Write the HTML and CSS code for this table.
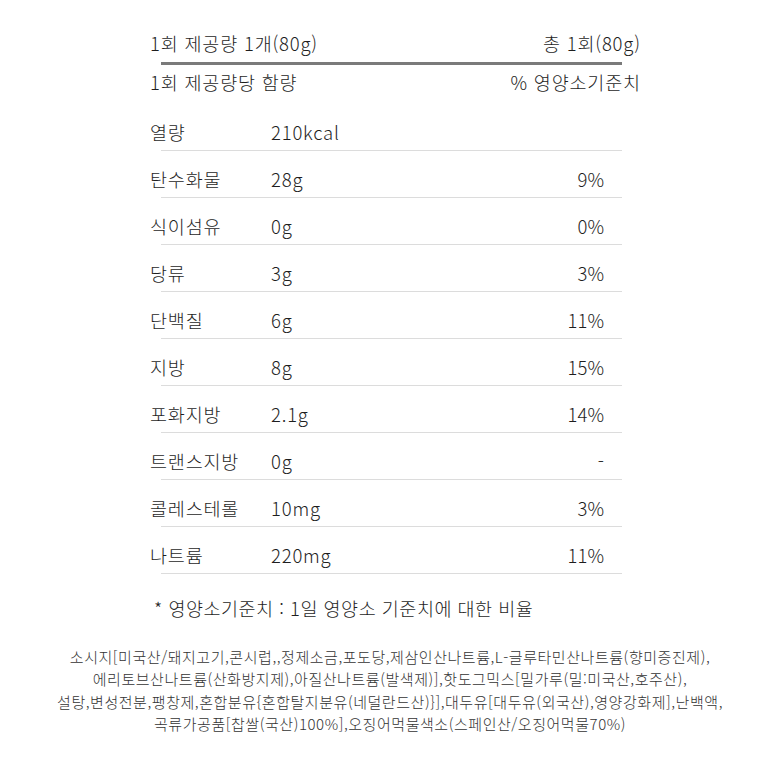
FILE: index.html
```html
<!DOCTYPE html>
<html lang="ko">
<head>
<meta charset="utf-8">
<link rel="stylesheet" href="styles.css">
</head>
<body>
<div class="panel">
  <div class="serving">
    <span>1회 제공량 1개(80g)</span>
    <span>총 1회(80g)</span>
  </div>
  <div class="thick"></div>
  <div class="head">
    <span>1회 제공량당 함량</span>
    <span>% 영양소기준치</span>
  </div>
  <div class="rows">
    <div class="row"><span class="name">열량</span><span class="val">210kcal</span><span class="pct"></span></div>
    <div class="row"><span class="name">탄수화물</span><span class="val">28g</span><span class="pct">9%</span></div>
    <div class="row"><span class="name">식이섬유</span><span class="val">0g</span><span class="pct">0%</span></div>
    <div class="row"><span class="name">당류</span><span class="val">3g</span><span class="pct">3%</span></div>
    <div class="row"><span class="name">단백질</span><span class="val">6g</span><span class="pct">11%</span></div>
    <div class="row"><span class="name">지방</span><span class="val">8g</span><span class="pct">15%</span></div>
    <div class="row"><span class="name">포화지방</span><span class="val">2.1g</span><span class="pct">14%</span></div>
    <div class="row"><span class="name">트랜스지방</span><span class="val">0g</span><span class="pct">-</span></div>
    <div class="row"><span class="name">콜레스테롤</span><span class="val">10mg</span><span class="pct">3%</span></div>
    <div class="row"><span class="name">나트륨</span><span class="val">220mg</span><span class="pct">11%</span></div>
  </div>
  <p class="note">* 영양소기준치 : 1일 영양소 기준치에 대한 비율</p>
</div>
<p class="ingredients">소시지[미국산/돼지고기,콘시럽,,정제소금,포도당,제삼인산나트륨,L-글루타민산나트륨(향미증진제),<br>에리토브산나트륨(산화방지제),아질산나트륨(발색제)],핫도그믹스[밀가루(밀:미국산,호주산),<br>설탕,변성전분,팽창제,혼합분유{혼합탈지분유(네덜란드산)}],대두유[대두유(외국산),영양강화제],난백액,<br>곡류가공품[찹쌀(국산)100%],오징어먹물색소(스페인산/오징어먹물70%)</p>
</body>
</html>
```
FILE: styles.css
```css
html, body {
  margin: 0;
  padding: 0;
  background: #fff;
}
body {
  font-family: "Noto Sans CJK KR", "Noto Sans", sans-serif;
  font-weight: 300;
  color: #1e1e1e;
  width: 780px;
  height: 780px;
  overflow: hidden;
}
.panel {
  margin-left: 150px;
  width: 490px;
  padding-top: 30px;
}
.serving, .head {
  display: flex;
  justify-content: space-between;
  font-size: 18.5px;
  line-height: 26px;
  letter-spacing: 0.8px;
}
.serving span:last-child, .head span:last-child {
  margin-right: -0.8px;
}
.thick {
  height: 3px;
  background: #7a7a7a;
  margin: 6px 18px 4px 11px;
}
.head {
  margin-bottom: 10px;
}
.rows {
  display: flex;
  flex-direction: column;
}
.row {
  display: grid;
  grid-template-columns: 121px 1fr 80px;
  font-size: 18.5px;
  line-height: 26px;
  height: 46px;
  box-sizing: border-box;
  padding-top: 14px;
  position: relative;
  letter-spacing: 0.8px;
}
.row::after {
  content: "";
  position: absolute;
  left: 11px;
  right: 18px;
  bottom: 0;
  height: 1px;
  background: #dcdcdc;
}
.row + .row {
  height: 47px;
  padding-top: 15px;
}
.pct {
  text-align: right;
  padding-right: 36px;
  letter-spacing: 0;
}
.note {
  margin: 21px 0 0 4px;
  font-size: 18.5px;
  line-height: 26px;
  letter-spacing: 0.5px;
}
.ingredients {
  margin: 25px 0 0 0;
  text-align: center;
  font-size: 15px;
  line-height: 22.3px;
  color: #333;
  letter-spacing: 0.55px;
}
```
